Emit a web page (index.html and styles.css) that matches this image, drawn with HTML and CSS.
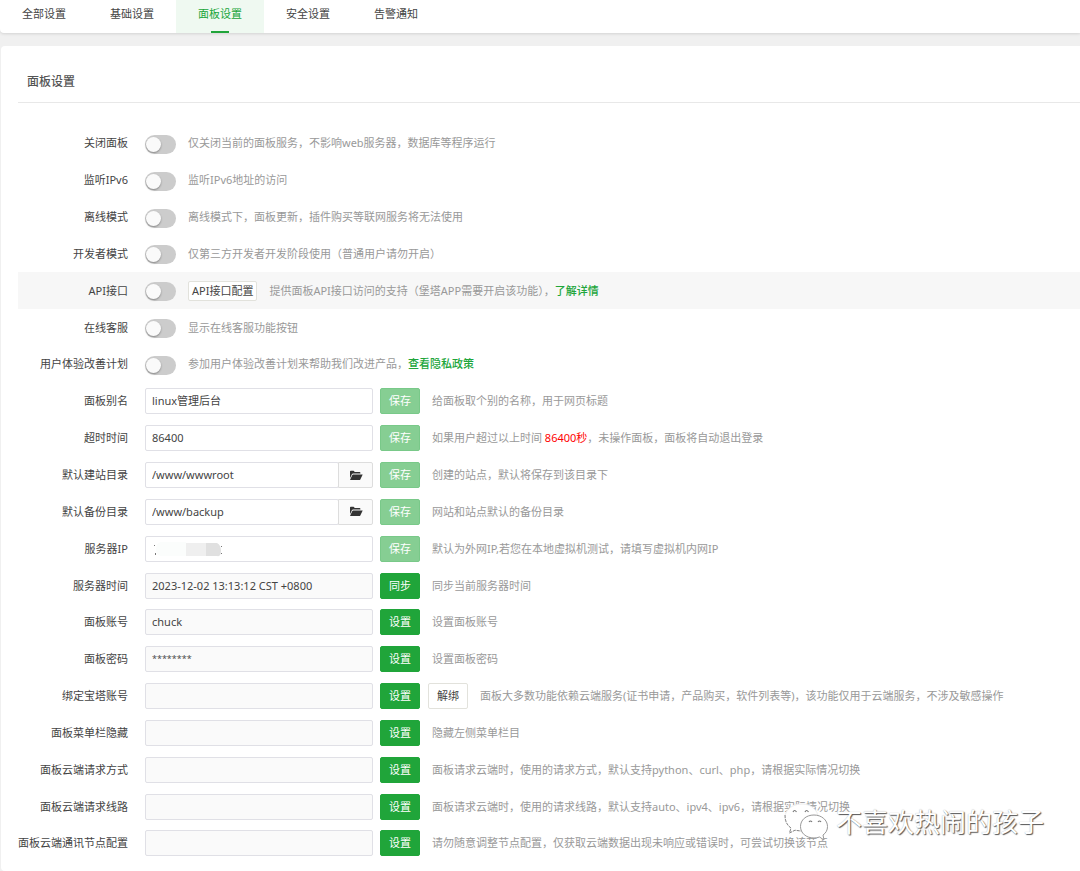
FILE: index.html
```html
<!DOCTYPE html>
<html lang="zh-CN">
<head>
<meta charset="utf-8">
<title>面板设置</title>
<link rel="stylesheet" href="styles.css">
</head>
<body>
<svg class="defs" aria-hidden="true">
  <symbol id="folder" viewBox="0 0 14 11">
    <path d="M1 8.2V1.6Q1 .8 1.8.8H4.6L5.8 2H10.6Q11.4 2 11.4 2.8V3.6H4.2Q3.2 3.6 2.7 4.5Z"/>
    <path d="M4.2 4.5H13.7L11.3 9.4Q11 10 10.2 10H1L3.2 5.200Q3.6 4.5 4.2 4.5Z"/>
  </symbol>
</svg>
<nav class="tabs">
  <a class="tab" href="#all">全部设置</a>
  <a class="tab" href="#base">基础设置</a>
  <a class="tab active" href="#panel" aria-current="page">面板设置</a>
  <a class="tab" href="#safe">安全设置</a>
  <a class="tab" href="#alarm">告警通知</a>
</nav>
<main class="panel" id="panel">
  <h1 class="title">面板设置</h1>
  <form class="form">
    <div class="row"><label class="label" for="close">关闭面板</label><input class="switch" type="checkbox" id="close"><p class="tip">仅关闭当前的面板服务，不影响web服务器，数据库等程序运行</p></div>
    <div class="row"><label class="label" for="ipv6">监听IPv6</label><input class="switch" type="checkbox" id="ipv6"><p class="tip">监听IPv6地址的访问</p></div>
    <div class="row"><label class="label" for="offline">离线模式</label><input class="switch" type="checkbox" id="offline"><p class="tip">离线模式下，面板更新，插件购买等联网服务将无法使用</p></div>
    <div class="row"><label class="label" for="dev">开发者模式</label><input class="switch" type="checkbox" id="dev"><p class="tip">仅第三方开发者开发阶段使用（普通用户请勿开启）</p></div>
    <div class="row highlight"><label class="label" for="api">API接口</label><input class="switch" type="checkbox" id="api"><button class="btn-small" type="button">API接口配置</button><p class="tip">提供面板API接口访问的支持（堡塔APP需要开启该功能），<a class="link" href="#api">了解详情</a></p></div>
    <div class="row"><label class="label" for="service">在线客服</label><input class="switch" type="checkbox" id="service"><p class="tip">显示在线客服功能按钮</p></div>
    <div class="row"><label class="label" for="plan">用户体验改善计划</label><input class="switch" type="checkbox" id="plan"><p class="tip">参加用户体验改善计划来帮助我们改进产品，<a class="link" href="#privacy">查看隐私政策</a></p></div>
    <div class="row"><label class="label" for="alias">面板别名</label><div class="field"><input class="input" id="alias" value="linux管理后台"></div><button class="btn faded" type="button">保存</button><p class="tip">给面板取个别的名称，用于网页标题</p></div>
    <div class="row"><label class="label" for="timeout">超时时间</label><div class="field"><input class="input" id="timeout" value="86400"></div><button class="btn faded" type="button">保存</button><p class="tip">如果用户超过以上时间 <span class="red">86400秒</span>，未操作面板，面板将自动退出登录</p></div>
    <div class="row"><label class="label" for="site">默认建站目录</label><div class="field"><input class="input" id="site" value="/www/wwwroot"><button class="browse" type="button" aria-label="选择目录"><svg class="folder"><use href="#folder"/></svg></button></div><button class="btn faded" type="button">保存</button><p class="tip">创建的站点，默认将保存到该目录下</p></div>
    <div class="row"><label class="label" for="backup">默认备份目录</label><div class="field"><input class="input" id="backup" value="/www/backup"><button class="browse" type="button" aria-label="选择目录"><svg class="folder"><use href="#folder"/></svg></button></div><button class="btn faded" type="button">保存</button><p class="tip">网站和站点默认的备份目录</p></div>
    <div class="row"><label class="label" for="ip">服务器IP</label><div class="field"><input class="input" id="ip"><svg class="mask" viewBox="0 0 72 16" aria-hidden="true"><path fill="#fbfdfc" d="M8 1H33V15H8Q3 14 3 8T8 1Z"/><path fill="#efefef" d="M33 2H53V15H33Z"/><path fill="#e0e0e0" d="M53 2H64Q68 4 68 10T64 15H53Z"/><path fill="#777" d="M1 4h1v1h-1zM2 12h1v2h-1zM68 5h1v1h-1zM68 12h1v1h-1z"/></svg></div><button class="btn faded" type="button">保存</button><p class="tip">默认为外网IP,若您在本地虚拟机测试，请填写虚拟机内网IP</p></div>
    <div class="row"><label class="label" for="time">服务器时间</label><div class="field"><input class="input" id="time" readonly value="2023-12-02 13:13:12 CST +0800"></div><button class="btn" type="button">同步</button><p class="tip">同步当前服务器时间</p></div>
    <div class="row"><label class="label" for="user">面板账号</label><div class="field"><input class="input" id="user" readonly value="chuck"></div><button class="btn" type="button">设置</button><p class="tip">设置面板账号</p></div>
    <div class="row"><label class="label" for="pass">面板密码</label><div class="field"><input class="input secret" id="pass" readonly value="********"></div><button class="btn" type="button">设置</button><p class="tip">设置面板密码</p></div>
    <div class="row"><label class="label" for="bind">绑定宝塔账号</label><div class="field"><input class="input" id="bind" readonly></div><button class="btn" type="button">设置</button><button class="btn plain" type="button">解绑</button><p class="tip">面板大多数功能依赖云端服务(证书申请，产品购买，软件列表等)，该功能仅用于云端服务，不涉及敏感操作</p></div>
    <div class="row"><label class="label" for="menu">面板菜单栏隐藏</label><div class="field"><input class="input" id="menu" readonly></div><button class="btn" type="button">设置</button><p class="tip">隐藏左侧菜单栏目</p></div>
    <div class="row"><label class="label" for="method">面板云端请求方式</label><div class="field"><input class="input" id="method" readonly></div><button class="btn" type="button">设置</button><p class="tip">面板请求云端时，使用的请求方式，默认支持python、curl、php，请根据实际情况切换</p></div>
    <div class="row"><label class="label" for="line">面板云端请求线路</label><div class="field"><input class="input" id="line" readonly></div><button class="btn" type="button">设置</button><p class="tip">面板请求云端时，使用的请求线路，默认支持auto、ipv4、ipv6，请根据实际情况切换</p></div>
    <div class="row"><label class="label" for="node">面板云端通讯节点配置</label><div class="field"><input class="input" id="node" readonly></div><button class="btn" type="button">设置</button><p class="tip">请勿随意调整节点配置，仅获取云端数据出现未响应或错误时，可尝试切换该节点</p></div>
  </form>
</main>
<div class="watermark">
  <svg class="wechat" viewBox="0 0 44 40" aria-hidden="true">
    <g fill="#fff" stroke-width="1">
      <path stroke="#eee" d="M18 2C8 2 1 8 1 15.500C1 20 3.500 23.500 7 26L5.500 31L11 28.200Q14 29.200 18 29.200C27 29.200 34 23 34 15.500S27 2 18 2Z"/>
      <path fill="none" stroke="#888" stroke-dasharray="3 1" d="M1 13C1 20 3.500 23.500 7 26L5.500 31L11 28.200L17 29"/>
      <path stroke="#999" d="M30 13C22 13 16.500 18 16.500 24.500S22 36 30 36Q33 36 35.500 35L40 38L39 33C42 31 43.500 28 43.500 24.500C43.500 18 37.500 13 30 13Z"/>
    </g>
    <path fill="none" stroke="#777" stroke-width="1.200" d="M9 10q1.500-3 3.500 0M21 10q1.500-3 3.500 0M25 20q1.500-2 3 0M34 20q1.500-2 3 0"/>
  </svg>
  <span>不喜欢热闹的孩子</span>
</div>
</body>
</html>
```

FILE: styles.css
```css
* { box-sizing: border-box; }

body {
  margin: 0;
  min-height: 100vh;
  display: flex;
  flex-direction: column;
  gap: 13px;
  background: #f0f0f0;
  color: #444;
  font: 11px/16px "Noto Sans", "Noto Sans CJK SC", sans-serif;
  overflow-x: hidden;
}

button, input { font: inherit; color: inherit; margin: 0; }
.defs { display: none; }

.tabs {
  display: flex;
  height: 33px;
  background: #fff;
  border-radius: 0 0 0 4px;
  box-shadow: 0 1px 3px rgba(0, 0, 0, .12);
}

.tab {
  display: flex;
  flex-direction: column;
  align-items: center;
  justify-content: space-between;
  width: 88px;
  padding-top: 6px;
  color: #444;
  text-decoration: none;
}

.tab.active { background: #eff9f1; color: #20a53a; }
.tab.active::after { content: ""; width: 18px; height: 2px; background: #20a53a; }

.panel {
  flex: 1;
  display: flex;
  flex-direction: column;
  margin-left: 1px;
  padding: 16px 0 9px 17px;
  background: #fff;
  border-radius: 4px 0 0 4px;
}

.title {
  margin: 0;
  padding: 12px 9px;
  border-bottom: 1px solid #e8e8e8;
  color: #555;
  font-size: 12px;
  line-height: 16px;
  font-weight: 500;
}

.form { flex: 1; display: flex; flex-direction: column; padding-top: 22px; }
.row { flex: 1 0 36px; display: flex; align-items: center; }
.highlight { background: #f7f7f7; }

.label { width: 110px; margin-right: 17px; text-align: right; white-space: nowrap; }
.tip { margin: 0 0 0 12px; color: #999; white-space: nowrap; }
.link { color: #20a53a; font-weight: 500; text-decoration: none; }
.red { color: #f00; }

.switch {
  appearance: none;
  width: 31px;
  height: 19px;
  margin-top: 2px;
  border-radius: 10px;
  background: #ccc;
}

.switch::before {
  content: "";
  display: block;
  width: 15px;
  height: 15px;
  margin: 2px 1px;
  border-radius: 50%;
  background: #fafafa;
  box-shadow: 0 1px 2px rgba(0, 0, 0, .35);
}

.switch:checked { background: #20a53a; }
.switch:checked::before { margin-left: 15px; }

.btn-small {
  height: 20px;
  margin-left: 12px;
  padding: 0 3px;
  border: 1px solid #e2e2dc;
  border-radius: 2px;
  background: #fff;
  line-height: 16px;
}

.field { position: relative; display: flex; width: 228px; height: 26px; margin-right: 7px; }

.input {
  flex: 1;
  min-width: 0;
  padding: 0 6px;
  border: 1px solid #e0e0e6;
  border-radius: 2px;
  background: #fff;
}

.input:read-only { background: #fafafa; }
.input.secret { font-family: "Open Sans", "Noto Sans", sans-serif; font-size: 9px; }

.browse {
  display: grid;
  place-items: center;
  width: 35px;
  margin-left: -1px;
  padding: 0;
  border: 1px solid #ddd;
  border-radius: 0 2px 2px 0;
  background: #fafafa;
}

.folder { width: 14px; height: 11px; fill: #333; }
.mask { position: absolute; left: 8px; top: 5px; width: 72px; height: 16px; }

.btn {
  width: 40px;
  height: 26px;
  padding: 0;
  border: 1px solid #20a53a;
  border-radius: 2px;
  background: #20a53a;
  color: #fff;
}

.btn.faded { background: #86ce93; border-color: #79c989; }
.btn.plain { margin-left: 8px; background: #fff; border-color: #e2e2dc; color: #444; }

.watermark {
  position: absolute;
  right: 36px;
  bottom: 29px;
  display: flex;
  align-items: center;
  gap: 8px;
  color: #fff;
  font-size: 26px;
  line-height: 40px;
  text-shadow: 1px 1px 1px #555, 0 0 1px #aaa;
}

.wechat { width: 44px; height: 40px; }
```
